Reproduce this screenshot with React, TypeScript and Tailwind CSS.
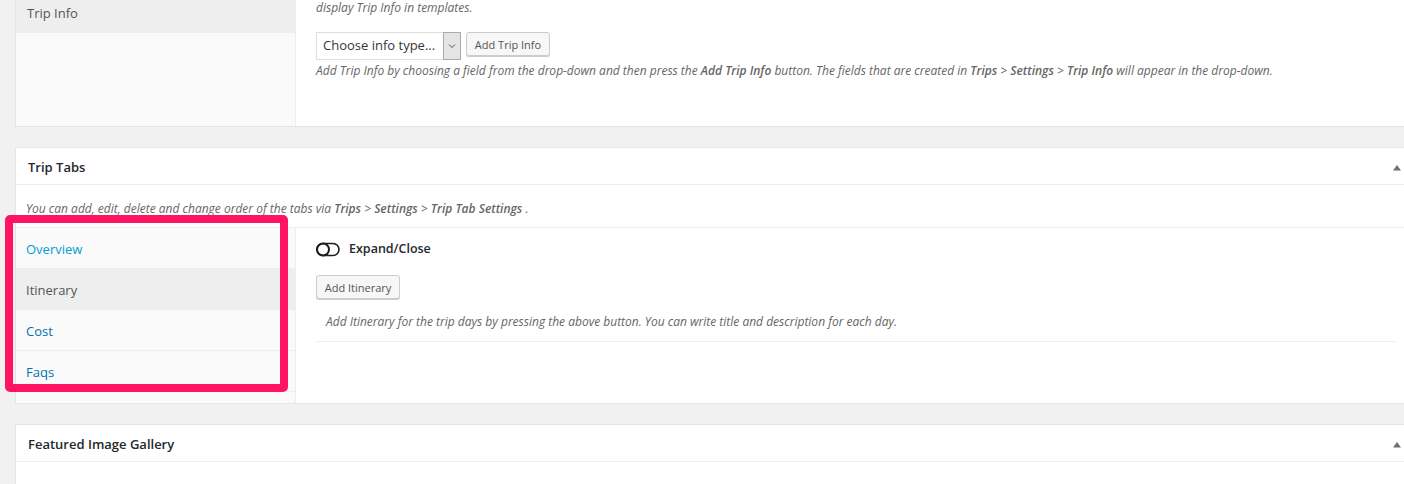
import React from "react";

const Caret = () => (
  <svg width="10" height="7" viewBox="0 0 10 7" className="block">
    <path d="M1 6.5 L5 1 L9 6.5 Z" fill="#6b7075" />
  </svg>
);

const Toggle = () => (
  <svg width="24" height="15" viewBox="0 0 24 15" className="block">
    <rect x="1" y="1.5" width="22" height="12" rx="6" fill="none" stroke="#1d1d1d" strokeWidth="1.6" />
    <circle cx="7" cy="7.5" r="6" fill="none" stroke="#1d1d1d" strokeWidth="2" />
  </svg>
);

export default function App() {
  const font = "font-['Open_Sans','Noto_Sans',sans-serif]";
  return (
    <div className={`relative w-[1404px] h-[484px] overflow-hidden bg-[#f1f1f1] ${font}`}>
      <div className="pl-[15px] w-[1417px]">
        {/* Top panel (Trip Info) */}
        <div className="-mt-2 mb-5 flex border border-t-0 border-[#e5e5e5] bg-white">
          <div className="w-[280px] shrink-0 bg-[#fafafa] border-r border-[#eee] h-[134px]">
            <div className="h-[41px] bg-[#eee] flex items-center pl-[11px] pt-[2px] text-[13px] text-[#555]">Trip Info</div>
          </div>
          <div className="flex-1 pl-5 pt-[6px]">
            <p className="text-[12px] italic text-[#666] leading-[20px]">display Trip Info in templates.</p>
            <div className="mt-[14px] flex items-start gap-[5px]">
              <div className="flex h-[28px] w-[145px] border border-[#ddd] bg-white">
                <div className="flex-1 flex items-center pl-[6px] text-[13px] text-[#32373c] whitespace-nowrap overflow-hidden">Choose info type...</div>
                <div className="w-[18px] shrink-0 flex items-center justify-center bg-[#e4e4e4] border border-[#aaa] -m-px">
                  <svg width="8" height="6" viewBox="0 0 8 6"><path d="M1 1.5 L4 4.5 L7 1.5" fill="none" stroke="#555" strokeWidth="1" /></svg>
                </div>
              </div>
              <button className="h-[24px] w-[84px] text-[11px] text-[#555] bg-[#f7f7f7] border border-[#ccc] rounded-[3px] shadow-[0_1px_0_#ccc] leading-none whitespace-nowrap">Add Trip Info</button>
            </div>
            <p className="mt-[2px] text-[12px] italic text-[#666] leading-[18px] whitespace-nowrap">
              Add Trip Info by choosing a field from the drop-down and then press the <b className="font-semibold">Add Trip Info</b> button. The fields that are created in <b className="font-semibold">Trips</b> &gt; <b className="font-semibold">Settings</b> &gt; <b className="font-semibold">Trip Info</b> will appear in the drop-down.
            </p>
          </div>
        </div>

        {/* Trip Tabs panel */}
        <div className="mb-5 border border-[#e5e5e5] bg-white">
          <div className="h-[37px] border-b border-[#eee] flex items-center justify-between pl-3 pr-[14px] pt-[3px]">
            <h2 className="text-[13px] font-semibold text-[#23282d]">Trip Tabs</h2>
            <Caret />
          </div>
          <div className="h-[43px] border-b border-[#eee] pl-[10px] pt-[15px]">
            <p className="text-[12px] italic text-[#666] leading-[18px]">
              You can add, edit, delete and change order of the tabs via <b className="font-semibold">Trips</b> &gt; <b className="font-semibold">Settings</b> &gt; <b className="font-semibold">Trip Tab Settings</b> .
            </p>
          </div>
          <div className="flex">
            <div className="w-[280px] shrink-0 bg-[#fafafa] border-r border-[#eee] h-[175px]">
              {[
                { t: "Overview", c: "text-[#00a0d2]", bg: "" },
                { t: "Itinerary", c: "text-[#555]", bg: "bg-[#eee]" },
                { t: "Cost", c: "text-[#0073aa]", bg: "" },
                { t: "Faqs", c: "text-[#0073aa]", bg: "" },
              ].map((it) => (
                <div key={it.t} className={`h-[41px] border-b border-[#eee] flex items-center pl-[10px] pt-[4px] text-[13px] ${it.c} ${it.bg}`}>
                  {it.t}
                </div>
              ))}
            </div>
            <div className="flex-1 pl-5 pr-5 pt-[13px]">
              <div className="flex items-center gap-[9px] h-[16px]">
                <Toggle />
                <span className="text-[12.5px] font-semibold text-[#23282d]">Expand/Close</span>
              </div>
              <button className="mt-[18px] h-[24px] w-[84px] text-[11px] text-[#555] bg-[#f7f7f7] border border-[#ccc] rounded-[3px] shadow-[0_1px_0_#ccc] leading-none whitespace-nowrap">Add Itinerary</button>
              <div className="mt-[14px] pl-[10px] pb-[10px] border-b border-[#eee]">
                <p className="text-[12px] italic text-[#666] leading-[18px]">
                  Add Itinerary for the trip days by pressing the above button. You can write title and description for each day.
                </p>
              </div>
            </div>
          </div>
        </div>

        {/* Featured Image Gallery */}
        <div className="border border-[#e5e5e5] bg-white h-[100px]">
          <div className="h-[37px] border-b border-[#eee] flex items-center justify-between pl-3 pr-[14px] pt-[3px]">
            <h2 className="text-[13px] font-semibold text-[#23282d]">Featured Image Gallery</h2>
            <Caret />
          </div>
        </div>
      </div>

      {/* highlight overlay */}
      <div className="absolute left-[5px] top-[215px] w-[283px] h-[177px] border-[8px] border-[#ff1461] rounded-[5px] pointer-events-none" />
    </div>
  );
}
